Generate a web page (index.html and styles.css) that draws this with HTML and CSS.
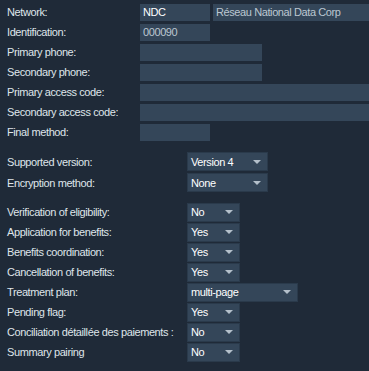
FILE: index.html
```html
<!doctype html>
<html lang="en">
  <head>
    <meta charset="UTF-8" />
    <title>Network settings</title>
    <link rel="stylesheet" href="styles.css">
  </head>
  <body>
    <div class="form">
      <div class="section">
        <div class="row">
          <label>Network:</label>
          <div class="fields">
            <div class="field w-short value">NDC</div>
            <div class="field grow muted">Réseau National Data Corp</div>
          </div>
        </div>
        <div class="row">
          <label>Identification:</label>
          <div class="field w-short muted">000090</div>
        </div>
        <div class="row">
          <label>Primary phone:</label>
          <div class="field w-phone"></div>
        </div>
        <div class="row">
          <label>Secondary phone:</label>
          <div class="field w-phone"></div>
        </div>
        <div class="row">
          <label>Primary access code:</label>
          <div class="field grow"></div>
        </div>
        <div class="row">
          <label>Secondary access code:</label>
          <div class="field grow"></div>
        </div>
        <div class="row">
          <label>Final method:</label>
          <div class="field w-short"></div>
        </div>
      </div>

      <div class="section section-select section-tight">
        <div class="row">
          <label>Supported version:</label>
          <div class="select w-mid"><span>Version 4</span><i class="caret"></i></div>
        </div>
        <div class="row">
          <label>Encryption method:</label>
          <div class="select w-mid"><span>None</span><i class="caret"></i></div>
        </div>
      </div>

      <div class="section section-select">
        <div class="row">
          <label>Verification of eligibility:</label>
          <div class="select w-small"><span>No</span><i class="caret"></i></div>
        </div>
        <div class="row">
          <label>Application for benefits:</label>
          <div class="select w-small"><span>Yes</span><i class="caret"></i></div>
        </div>
        <div class="row">
          <label>Benefits coordination:</label>
          <div class="select w-small"><span>Yes</span><i class="caret"></i></div>
        </div>
        <div class="row">
          <label>Cancellation of benefits:</label>
          <div class="select w-small"><span>Yes</span><i class="caret"></i></div>
        </div>
        <div class="row">
          <label>Treatment plan:</label>
          <div class="select w-wide"><span>multi-page</span><i class="caret"></i></div>
        </div>
        <div class="row">
          <label>Pending flag:</label>
          <div class="select w-small"><span>Yes</span><i class="caret"></i></div>
        </div>
        <div class="row">
          <label>Conciliation détaillée des paiements :</label>
          <div class="select w-small"><span>No</span><i class="caret"></i></div>
        </div>
        <div class="row">
          <label>Summary pairing</label>
          <div class="select w-small"><span>No</span><i class="caret"></i></div>
        </div>
      </div>
    </div>
  </body>
</html>
```

FILE: styles.css
```css
body {
  margin: 0;
  background-color: #1f2a38;
  color: #dfe5ea;
  font-family: "Liberation Sans", Arial, sans-serif;
  font-size: 11px;
  letter-spacing: -0.4px;
  overflow: hidden;
}
.form {
  padding: 2px 0 0 7px;
}
.section {
  display: flex;
  flex-direction: column;
}
.section-select {
  margin-top: 9px;
}
.section-tight .row {
  height: 21px;
}
.row {
  display: flex;
  align-items: center;
  height: 20px;
}
.row label {
  width: 133px;
  flex: none;
  white-space: nowrap;
}
.section-select .row label {
  width: 180px;
}
.fields {
  display: flex;
  flex: 1;
  gap: 3px;
}
.field {
  height: 17px;
  line-height: 17px;
  padding: 0 3px;
  box-sizing: border-box;
  background-color: #344659;
  white-space: nowrap;
}
.grow {
  flex: 1;
}
.w-short {
  width: 70px;
}
.w-phone {
  width: 122px;
}
.value {
  color: #ffffff;
}
.muted {
  color: #bcc7d1;
}
.select {
  display: flex;
  align-items: center;
  justify-content: space-between;
  height: 19px;
  padding: 0 6px 0 3px;
  box-sizing: border-box;
  background-color: #344659;
  border: 1px solid #2a3a4b;
  color: #ffffff;
}
.w-small {
  width: 53px;
}
.w-mid {
  width: 81px;
}
.w-wide {
  width: 111px;
}
.caret {
  width: 0;
  height: 0;
  border-left: 4px solid transparent;
  border-right: 4px solid transparent;
  border-top: 4px solid #b4c0cb;
}
```
